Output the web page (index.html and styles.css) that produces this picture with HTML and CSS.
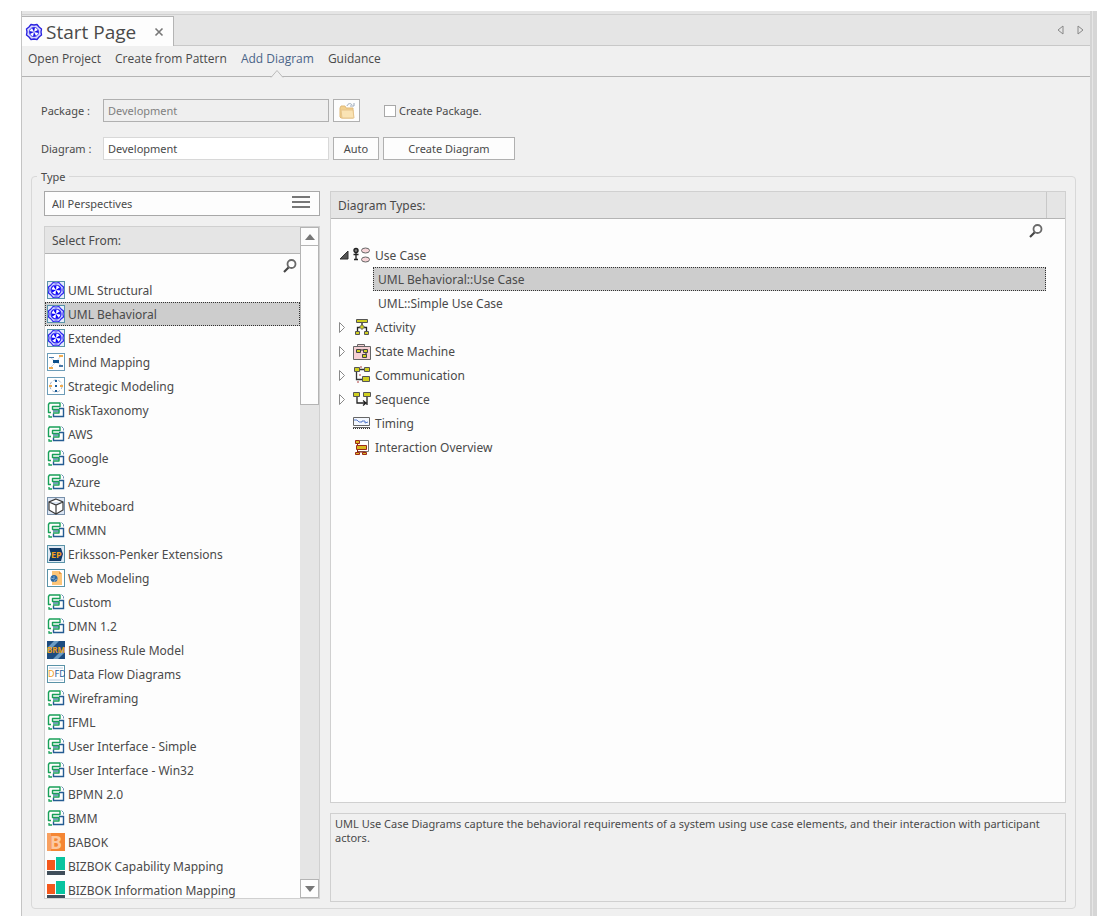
FILE: index.html
```html
<!DOCTYPE html>
<html lang="en">
  <head>
    <meta charset="utf-8" />
    <meta name="viewport" content="width=device-width" />
    <title>Start Page</title>
    <link rel="stylesheet" href="styles.css">
  </head>

  <body>
    <!-- Shared icons -->
    <svg class="sprite" aria-hidden="true">
      <symbol id="flower" viewBox="0 0 18 18">
        <path d="M6 1.500l3 .5 3-.5 2 2.500 2.500 2-.5 3 .5 3-2.500 2-2 2.500-3-.5-3 .5L4 14l-2.500-2L2 9l-.5-3L4 4z" fill="#dcdcff" stroke="#2a22e0" stroke-width="1.400" stroke-linejoin="round" />
        <circle cx="9" cy="9" r="4.700" fill="#fff" stroke="#4a44e8" />
        <path d="M9 9L7 5l3-.5zM9 9l4-2 .5 3zM9 9l2 4-3 .5zM9 9l-4 2-.5-3z" fill="#1a12e8" />
      </symbol>
      <symbol id="uml" viewBox="0 0 18 18">
        <rect x=".5" y=".5" width="17" height="17" fill="#e4ecfa" stroke="#5a93a8" />
        <path d="M6 1.500l3 .5 3-.5 2 2.500 2.500 2-.5 3 .5 3-2.500 2-2 2.500-3-.5-3 .5L4 14l-2.500-2L2 9l-.5-3L4 4z" fill="#d4d8ff" stroke="#2a22f0" stroke-width="1.200" stroke-linejoin="round" />
        <circle cx="9" cy="9" r="5" fill="#fff" stroke="#2a22f0" stroke-width="1.200" />
        <path d="M9 9L6.500 5.500l3-1.500zM9 9l3.500-2.500 1.500 3zM9 9l2.500 3.500-3 1.500zM9 9l-3.500 2.500L4 8.500z" fill="#0a02f8" />
      </symbol>
      <symbol id="mind" viewBox="0 0 18 18">
        <rect x=".5" y=".5" width="17" height="17" fill="#fff" stroke="#6c9cb8" />
        <path d="M4 5l5 4 4-5M4 14l5-5 5 3" fill="none" stroke="#c9d5e4" />
        <path d="M6 7h6v3H6z" fill="#0d4f8b" />
        <path d="M2 4h5v1H2zM12 12h4v2h-4z" fill="#4878a8" />
        <path d="M12 2h4v2h-4zM2 14h4v2H2z" fill="#f0ac50" />
      </symbol>
      <symbol id="strategic" viewBox="0 0 18 18">
        <rect x=".5" y=".5" width="17" height="17" fill="#fff" stroke="#6c9cb8" />
        <circle cx="9" cy="9" r="6" fill="none" stroke="#9db0c6" stroke-dasharray="3 2" />
        <path d="M8 3h2v2H8zM8 13h2v2H8zM8 8h2v2H8z" fill="#1d5c96" />
        <path d="M2 8h3v2H2zM13 8h3v2h-3z" fill="#f0ac50" />
      </symbol>
      <symbol id="tech" viewBox="0 0 18 18">
        <path d="M12 7.500h4.500v8h-10v-3" fill="none" stroke="#245c92" stroke-width="1.400" />
        <path d="M6 10h6.500" stroke="#245c92" stroke-width="1.200" />
        <path d="M14.500 1.500l2 2v2" fill="none" stroke="#6d93b6" />
        <path d="M4 11.500H1.500v-8l1-1.500h10.500v3.500H5.500v3h6.500v3.500H6" fill="none" stroke="#18a058" stroke-width="1.400" stroke-linejoin="round" />
        <path d="M2 14v2h3" fill="none" stroke="#18a058" stroke-width="1.300" />
      </symbol>
      <symbol id="cube" viewBox="0 0 18 18">
        <rect x=".5" y=".5" width="17" height="17" fill="#dce6f4" stroke="#7890aa" />
        <path d="M9 2l7 3v8l-7 4-7-4V5zM2 5l7 3 7-3M9 8v9" fill="#fff" stroke="#3a3a3a" stroke-width="1.200" />
      </symbol>
      <symbol id="ep" viewBox="0 0 18 18">
        <rect x=".5" y=".5" width="17" height="17" fill="#dfeaf4" stroke="#5a93a8" />
        <path d="M2 3h12l2 6-2 7H2l2-7z" fill="#123a66" />
        <text x="4" y="13" font-size="9" font-weight="bold" fill="#f0a020">EP</text>
      </symbol>
      <symbol id="web" viewBox="0 0 18 18">
        <rect x=".5" y=".5" width="17" height="17" fill="#fff" stroke="#5a93a8" />
        <path d="M5 2h7l3 3v11H5z" fill="#fcc578" />
        <path d="M12 2v3h3z" fill="#e8963c" />
        <circle cx="7" cy="9.500" r="3.500" fill="#2c68a0" />
        <path d="M4 9l3 1V7M7 13l1-2 2-1" fill="none" stroke="#9cbcd8" stroke-width=".8" />
      </symbol>
      <symbol id="brm" viewBox="0 0 18 18">
        <rect width="18" height="18" fill="#1d4c80" />
        <path d="M0 7l7-7h5L0 12zM6 18L18 6v5l-7 7z" fill="#6c9cc4" />
        <text x="0" y="12" font-size="8" font-weight="bold" fill="#f0a020">BRM</text>
      </symbol>
      <symbol id="dfd" viewBox="0 0 18 18">
        <rect x=".5" y=".5" width="17" height="17" fill="#fff" stroke="#5a93a8" />
        <path d="M2 3h14M2 15h14" stroke="#b8cce0" />
        <text x="1" y="12" font-size="9" fill="#1d5c96"><tspan fill="#f0a020">D</tspan>FD</text>
      </symbol>
      <symbol id="babok" viewBox="0 0 18 18">
        <rect width="18" height="18" fill="#f58634" />
        <path d="M0 0h4v18H0z" fill="#f8a060" />
        <text x="3" y="16" font-size="18" font-weight="bold" fill="#fcc8a0">B</text>
      </symbol>
      <symbol id="bizbok" viewBox="0 0 18 18">
        <path d="M0 3h8v10H0z" fill="#f4581c" />
        <path d="M9 0h9v13H9z" fill="#08c4a0" />
        <path d="M0 14h18v4H0z" fill="#404e5a" />
      </symbol>
      <symbol id="search" viewBox="0 0 14 14">
        <circle cx="8.500" cy="5" r="4" fill="#fff" stroke="#6a6a6a" stroke-width="1.800" />
        <path d="M5.500 8.500L1 13" stroke="#444" stroke-width="2.200" />
      </symbol>
      <symbol id="closed" viewBox="0 0 12 12">
        <path d="M1.500 1.500L6.500 6.500l-5 5z" fill="#fff" stroke="#8a8a8a" />
      </symbol>
      <symbol id="open" viewBox="0 0 12 12">
        <path d="M10 2v8H2z" fill="#555" stroke="#333" />
      </symbol>
      <symbol id="usecase" viewBox="0 0 18 18">
        <circle cx="3" cy="4.500" r="2" fill="#777" stroke="#222" stroke-width="1.400" />
        <path d="M3 6v7M.5 8.500h5M1 13.500h4" stroke="#222" stroke-width="1.300" />
        <ellipse cx="12.500" cy="4.500" rx="4" ry="2.500" fill="#f6d4d8" stroke="#666" />
        <ellipse cx="12.500" cy="13.500" rx="4" ry="2.500" fill="#f6d4d8" stroke="#666" />
      </symbol>
      <symbol id="activity" viewBox="0 0 18 18">
        <path d="M9 5v3M7 9.500H4.500v4M11 9.500h2.500v4" fill="none" stroke="#222" stroke-width="1.300" />
        <path d="M3.500 1.500h11v3h-11zM2.500 13.500h4v3h-4zM11.500 13.500h4v3h-4zM9 6.500L11.500 9 9 11.500 6.500 9z" fill="#cfcf20" stroke="#555" />
      </symbol>
      <symbol id="state" viewBox="0 0 18 18">
        <path d="M.5 4.500h17v13H.5zM4.500 2.500h7v2h-7z" fill="#f6d0d4" stroke="#666" />
        <path d="M7 8h4M13 10v3H9" fill="none" stroke="#222" />
        <path d="M3.500 7.500h4v3h-4zM10.500 7.500h4v3h-4zM9.500 12.500h4v3h-4z" fill="#cfcf20" stroke="#444" />
      </symbol>
      <symbol id="comm" viewBox="0 0 18 18">
        <path d="M7 3.500h4M3.500 6v7.500h6" fill="none" stroke="#333" stroke-width="1.300" />
        <path d="M7 1h2M4 16h2M6 9h2" stroke="#b04040" />
        <path d="M1.500 1.500h5v4h-5zM11.500 1.500h5v4h-5zM9.500 10.500h7v5h-7z" fill="#cfcf20" stroke="#555" />
      </symbol>
      <symbol id="sequence" viewBox="0 0 18 18">
        <path d="M4 7v6h9M14 7v8M10 10.500l3 2.500-3 2.500" fill="none" stroke="#222" stroke-width="1.300" />
        <path d="M.5 2.500h6v4h-6zM10.500 2.500h7v4h-7z" fill="#cfcf20" stroke="#555" />
      </symbol>
      <symbol id="timing" viewBox="0 0 18 18">
        <path d="M.5 3.500h16v8H.5z" fill="#f4f8ff" stroke="#666" />
        <path d="M1 6h3l2 2h3V7h3v2l3-1" fill="none" stroke="#5578c8" />
        <path d="M0 14.500h17" stroke="#333" stroke-dasharray="1 1" />
        <path d="M0 13.500h17" stroke="#666" />
      </symbol>
      <symbol id="overview" viewBox="0 0 18 18">
        <path d="M7 2.500h8.500v11H5" fill="#fff" stroke="#777" />
        <path d="M4.500 5v9h8" fill="none" stroke="#8c2010" />
        <path d="M2.500 2.500h4v3h-4zM3.500 7.500h10v4h-10zM2.500 14.500h4v2h-4zM9.500 14.500h4v2h-4z" fill="#d8b820" stroke="#9c2818" />
      </symbol>
    </svg>

    <div class="window">
      <div class="main">
        <header class="tabbar">
          <div class="tab">
            <svg class="tab-icon"><use href="#flower" /></svg>
            <span class="tab-title">Start Page</span>
            <button class="close" aria-label="Close">
              <svg viewBox="0 0 10 10"><path d="M1.500 1.500l7 7M8.500 1.500l-7 7" stroke="#777" stroke-width="1.600" /></svg>
            </button>
          </div>
          <div class="arrows">
            <button aria-label="Previous tab">
              <svg viewBox="0 0 10 10"><path d="M7 1v8L2 5z" fill="none" stroke="#888" /></svg>
            </button>
            <button aria-label="Next tab">
              <svg viewBox="0 0 10 10"><path d="M3 1v8l5-4z" fill="none" stroke="#888" /></svg>
            </button>
          </div>
        </header>

        <nav class="menu">
          <a href="#">Open Project</a>
          <a href="#">Create from Pattern</a>
          <a href="#" class="current">Add Diagram
            <svg class="notch" viewBox="0 0 14 9"><path d="M1 8.500L7 1.500l6 7" fill="#f0f0f0" stroke="#bbb" /></svg>
          </a>
          <a href="#">Guidance</a>
        </nav>

        <form class="content">
          <div class="field">
            <label for="package">Package :</label>
            <input id="package" type="text" value="Development" disabled />
            <button type="button" class="browse" aria-label="Browse">
              <svg viewBox="0 0 18 18">
                <path d="M2 6l1-2h4l1 2h7v10H3l-1-1z" fill="#f3d08c" stroke="#dfb878" />
                <path d="M3 8h12l1 8H4z" fill="#fae3b4" stroke="#e6c48c" />
                <path d="M9 4c1-3 4-3 5-1M12 4h4V1" fill="none" stroke="#9aa8ba" />
              </svg>
            </button>
            <label class="check"><input type="checkbox" />Create Package.</label>
          </div>
          <div class="field">
            <label for="diagram">Diagram :</label>
            <input id="diagram" type="text" value="Development" />
            <button type="button" class="auto">Auto</button>
            <button type="button" class="create">Create Diagram</button>
          </div>

          <fieldset class="type">
            <legend>Type</legend>
            <div class="columns">
              <div class="left">
                <div class="combo">
                  <select aria-label="Perspective">
                    <option>All Perspectives</option>
                  </select>
                  <svg viewBox="0 0 18 12"><path d="M0 1h18M0 6h18M0 11h18" stroke="#777" stroke-width="2" /></svg>
                </div>
                <div class="picker">
                  <div class="picker-main">
                    <div class="head">Select From:</div>
                    <div class="find">
                      <input type="text" aria-label="Find a perspective" />
                      <svg><use href="#search" /></svg>
                    </div>
                    <ul class="list">
                      <li><button type="button"><svg><use href="#uml" /></svg>UML Structural</button></li>
                      <li><button type="button" class="selected"><svg><use href="#uml" /></svg>UML Behavioral</button></li>
                      <li><button type="button"><svg><use href="#uml" /></svg>Extended</button></li>
                      <li><button type="button"><svg><use href="#mind" /></svg>Mind Mapping</button></li>
                      <li><button type="button"><svg><use href="#strategic" /></svg>Strategic Modeling</button></li>
                      <li><button type="button"><svg><use href="#tech" /></svg>RiskTaxonomy</button></li>
                      <li><button type="button"><svg><use href="#tech" /></svg>AWS</button></li>
                      <li><button type="button"><svg><use href="#tech" /></svg>Google</button></li>
                      <li><button type="button"><svg><use href="#tech" /></svg>Azure</button></li>
                      <li><button type="button"><svg><use href="#cube" /></svg>Whiteboard</button></li>
                      <li><button type="button"><svg><use href="#tech" /></svg>CMMN</button></li>
                      <li><button type="button"><svg><use href="#ep" /></svg>Eriksson-Penker Extensions</button></li>
                      <li><button type="button"><svg><use href="#web" /></svg>Web Modeling</button></li>
                      <li><button type="button"><svg><use href="#tech" /></svg>Custom</button></li>
                      <li><button type="button"><svg><use href="#tech" /></svg>DMN 1.2</button></li>
                      <li><button type="button"><svg><use href="#brm" /></svg>Business Rule Model</button></li>
                      <li><button type="button"><svg><use href="#dfd" /></svg>Data Flow Diagrams</button></li>
                      <li><button type="button"><svg><use href="#tech" /></svg>Wireframing</button></li>
                      <li><button type="button"><svg><use href="#tech" /></svg>IFML</button></li>
                      <li><button type="button"><svg><use href="#tech" /></svg>User Interface - Simple</button></li>
                      <li><button type="button"><svg><use href="#tech" /></svg>User Interface - Win32</button></li>
                      <li><button type="button"><svg><use href="#tech" /></svg>BPMN 2.0</button></li>
                      <li><button type="button"><svg><use href="#tech" /></svg>BMM</button></li>
                      <li><button type="button"><svg><use href="#babok" /></svg>BABOK</button></li>
                      <li><button type="button"><svg><use href="#bizbok" /></svg>BIZBOK Capability Mapping</button></li>
                      <li><button type="button"><svg><use href="#bizbok" /></svg>BIZBOK Information Mapping</button></li>
                    </ul>
                  </div>
                  <div class="scrollbar">
                    <button type="button" aria-label="Scroll up">
                      <svg viewBox="0 0 10 6"><path d="M0 6l5-6 5 6z" fill="#777" /></svg>
                    </button>
                    <div class="thumb"></div>
                    <button type="button" aria-label="Scroll down">
                      <svg viewBox="0 0 10 6"><path d="M0 0l5 6 5-6z" fill="#777" /></svg>
                    </button>
                  </div>
                </div>
              </div>

              <div class="right">
                <div class="types">
                  <div class="head"><span>Diagram Types:</span></div>
                  <div class="find">
                    <input type="text" aria-label="Find a diagram type" />
                    <svg><use href="#search" /></svg>
                  </div>
                  <ul class="tree">
                    <li>
                      <button type="button"><svg class="arrow"><use href="#open" /></svg><svg><use href="#usecase" /></svg>Use Case</button>
                      <ul>
                        <li><button type="button" class="selected">UML Behavioral::Use Case</button></li>
                        <li><button type="button">UML::Simple Use Case</button></li>
                      </ul>
                    </li>
                    <li><button type="button"><svg class="arrow"><use href="#closed" /></svg><svg><use href="#activity" /></svg>Activity</button></li>
                    <li><button type="button"><svg class="arrow"><use href="#closed" /></svg><svg><use href="#state" /></svg>State Machine</button></li>
                    <li><button type="button"><svg class="arrow"><use href="#closed" /></svg><svg><use href="#comm" /></svg>Communication</button></li>
                    <li><button type="button"><svg class="arrow"><use href="#closed" /></svg><svg><use href="#sequence" /></svg>Sequence</button></li>
                    <li><button type="button"><svg class="arrow"></svg><svg><use href="#timing" /></svg>Timing</button></li>
                    <li><button type="button"><svg class="arrow"></svg><svg><use href="#overview" /></svg>Interaction Overview</button></li>
                  </ul>
                </div>
                <p class="notes">UML Use Case Diagrams capture the behavioral requirements of a system using use case elements, and their interaction with participant actors.</p>
              </div>
            </div>
          </fieldset>
        </form>
      </div>
      <div class="edge"></div>
    </div>
  </body>
</html>
```
FILE: styles.css
```css
* {
  box-sizing: border-box;
}

body {
  margin: 0;
  padding: 11px 18px 0 21px;
  height: 100vh;
  overflow: hidden;
  background: #fff;
  color: #4a4a4a;
  font-family: "Noto Sans", "Open Sans", sans-serif;
  font-size: 12px;
}

button,
input,
select {
  margin: 0;
  font: inherit;
  color: inherit;
}

button {
  padding: 0;
  border: 0;
  background: none;
}

ul {
  margin: 0;
  padding: 0;
  list-style: none;
}

svg {
  display: block;
  flex: none;
}

.sprite {
  display: none;
}

.window {
  display: flex;
  height: 100%;
}

.main {
  flex: 1;
  min-width: 0;
  display: flex;
  flex-direction: column;
  border-left: 1px solid #c4c4c4;
  background: #f0f0f0;
}

.edge {
  width: 7px;
  border-left: 2px solid #d4d4d4;
  border-right: 4px solid #d6d6d6;
  background: #e6e6e6;
}

/* Tab bar */
.tabbar {
  display: flex;
  justify-content: space-between;
  align-items: flex-end;
  height: 35px;
  border-bottom: 1px solid #c8c8c8;
  background: linear-gradient(#d0d0d0, #d0d0d0) 0 3px / 100% 1px no-repeat #e5e5e5;
}

.tab {
  display: flex;
  align-items: center;
  height: 30px;
  margin-bottom: -1px;
  padding: 0 9px 0 3px;
  border-top: 1px solid #b4b4b4;
  border-right: 1px solid #b4b4b4;
  background: #fdfdfd;
}

.tab-icon {
  width: 18px;
  height: 18px;
}

.tab-title {
  margin: 0 18px 0 3px;
  font-family: "Open Sans", sans-serif;
  font-size: 19px;
}

.close svg,
.arrows svg {
  width: 10px;
  height: 10px;
}

.arrows {
  display: flex;
  align-items: center;
  gap: 9px;
  height: 30px;
  padding-right: 5px;
}

.menu {
  display: flex;
  align-items: center;
  gap: 14px;
  height: 31px;
  padding: 0 6px 5px;
  border-bottom: 1px solid #b4b4b4;
  font-family: "Open Sans", sans-serif;
}

.menu a {
  position: relative;
  color: inherit;
  text-decoration: none;
}

.menu .current {
  color: #4a6488;
}

.notch {
  position: absolute;
  left: 50%;
  top: 19px;
  width: 14px;
  height: 9px;
  margin-left: -7px;
}

/* Form */
.content {
  flex: 1;
  min-height: 0;
  display: flex;
  flex-direction: column;
  padding: 22px 14px 7px 9px;
  font-size: 11px;
}

.field {
  display: flex;
  align-items: center;
  gap: 4px;
  height: 23px;
  margin: 0 0 15px 10px;
}

.field > label:first-child {
  width: 58px;
}

.field > input {
  width: 226px;
  height: 23px;
  padding: 0 4px;
  border: 1px solid #d8d8d8;
  background: #fff;
}

.field > input:disabled {
  border-color: #b0b0b0;
  background: #efefef;
  color: #808080;
}

.field button {
  display: flex;
  align-items: center;
  justify-content: center;
  height: 23px;
  border: 1px solid #b0b0b0;
  background: #fdfdfd;
}

.browse {
  width: 27px;
}

.browse svg {
  width: 18px;
  height: 18px;
}

.auto {
  width: 46px;
}

.create {
  width: 132px;
}

.check {
  display: flex;
  align-items: center;
  gap: 3px;
  margin-left: 20px;
}

.check input {
  appearance: none;
  width: 12px;
  height: 12px;
  border: 1px solid #a8a8a8;
  background: #fff;
}

.type {
  flex: 1;
  min-height: 0;
  min-width: 0;
  display: flex;
  flex-direction: column;
  margin: -6px 0 0;
  padding: 7px 9px 6px 12px;
  border: 1px solid #d8d8d8;
  border-radius: 4px;
}

.type legend {
  margin-left: -7px;
  padding: 0 4px;
  line-height: 15px;
}

.columns {
  flex: 1;
  min-height: 0;
  display: flex;
  gap: 10px;
}

.left {
  width: 276px;
  display: flex;
  flex-direction: column;
  gap: 10px;
}

.combo {
  position: relative;
}

.combo select {
  display: block;
  appearance: none;
  width: 100%;
  height: 25px;
  padding: 0 7px;
  border: 1px solid #a8a8a8;
  border-radius: 0;
  background: #fdfdfd;
}

.combo svg {
  position: absolute;
  right: 10px;
  top: 5px;
  width: 18px;
  height: 12px;
}

.picker {
  flex: 1;
  min-height: 0;
  display: flex;
  margin-bottom: 3px;
  border: 1px solid #d0d0d0;
  background: #fdfdfd;
}

.picker-main {
  flex: 1;
  min-width: 0;
  display: flex;
  flex-direction: column;
}

.head {
  display: flex;
  align-items: center;
  flex: none;
  height: 27px;
  padding: 0 7px;
  border-bottom: 1px solid #b4b4b4;
  background: #e5e5e5;
  font-size: 12px;
}

.find {
  display: flex;
  align-items: center;
  flex: none;
  height: 24px;
  padding-right: 3px;
}

.find input {
  flex: 1;
  min-width: 0;
  height: 100%;
  border: 0;
  background: none;
}

.find svg {
  width: 14px;
  height: 14px;
}

.list {
  flex: 1;
  min-height: 0;
  overflow: hidden;
}

.list button,
.tree button {
  display: flex;
  align-items: center;
  width: 100%;
  height: 24px;
  border: 1px solid transparent;
  font-size: 12px;
}

.list button {
  gap: 3px;
  padding-left: 1px;
}

.list svg,
.tree svg {
  width: 18px;
  height: 18px;
}

.list .selected,
.tree .selected {
  border: 1px dotted #333;
  background: #cdcdcd;
}

.scrollbar {
  display: flex;
  flex-direction: column;
  width: 19px;
  background: #e5e5e5;
}

.scrollbar button {
  display: flex;
  align-items: center;
  justify-content: center;
  height: 19px;
  border: 1px solid #b4b4b4;
  background: #fdfdfd;
}

.scrollbar button:last-child {
  margin-top: auto;
}

.scrollbar svg {
  width: 10px;
  height: 6px;
}

.thumb {
  height: 159px;
  border: 1px solid #b4b4b4;
  border-top: 0;
  background: #fdfdfd;
}

.right {
  flex: 1;
  min-width: 0;
  display: flex;
  flex-direction: column;
  gap: 10px;
}

.types {
  flex: 1;
  min-height: 0;
  border: 1px solid #d0d0d0;
  background: #fdfdfd;
}

.types .head {
  padding-right: 18px;
}

.types .head span {
  flex: 1;
  display: flex;
  align-items: center;
  height: 100%;
  border-right: 1px solid #c8c8c8;
}

.types .find {
  padding-right: 22px;
}

.tree button {
  gap: 4px;
  padding-left: 6px;
}

.tree svg.arrow {
  width: 12px;
  height: 12px;
  margin-right: -1px;
}

.tree ul {
  padding: 0 19px 0 42px;
}

.tree ul button {
  padding-left: 4px;
}

.notes {
  flex: none;
  height: 89px;
  margin: 0;
  padding: 3px 4px;
  border: 1px solid #d0d0d0;
  line-height: 14px;
}
```
